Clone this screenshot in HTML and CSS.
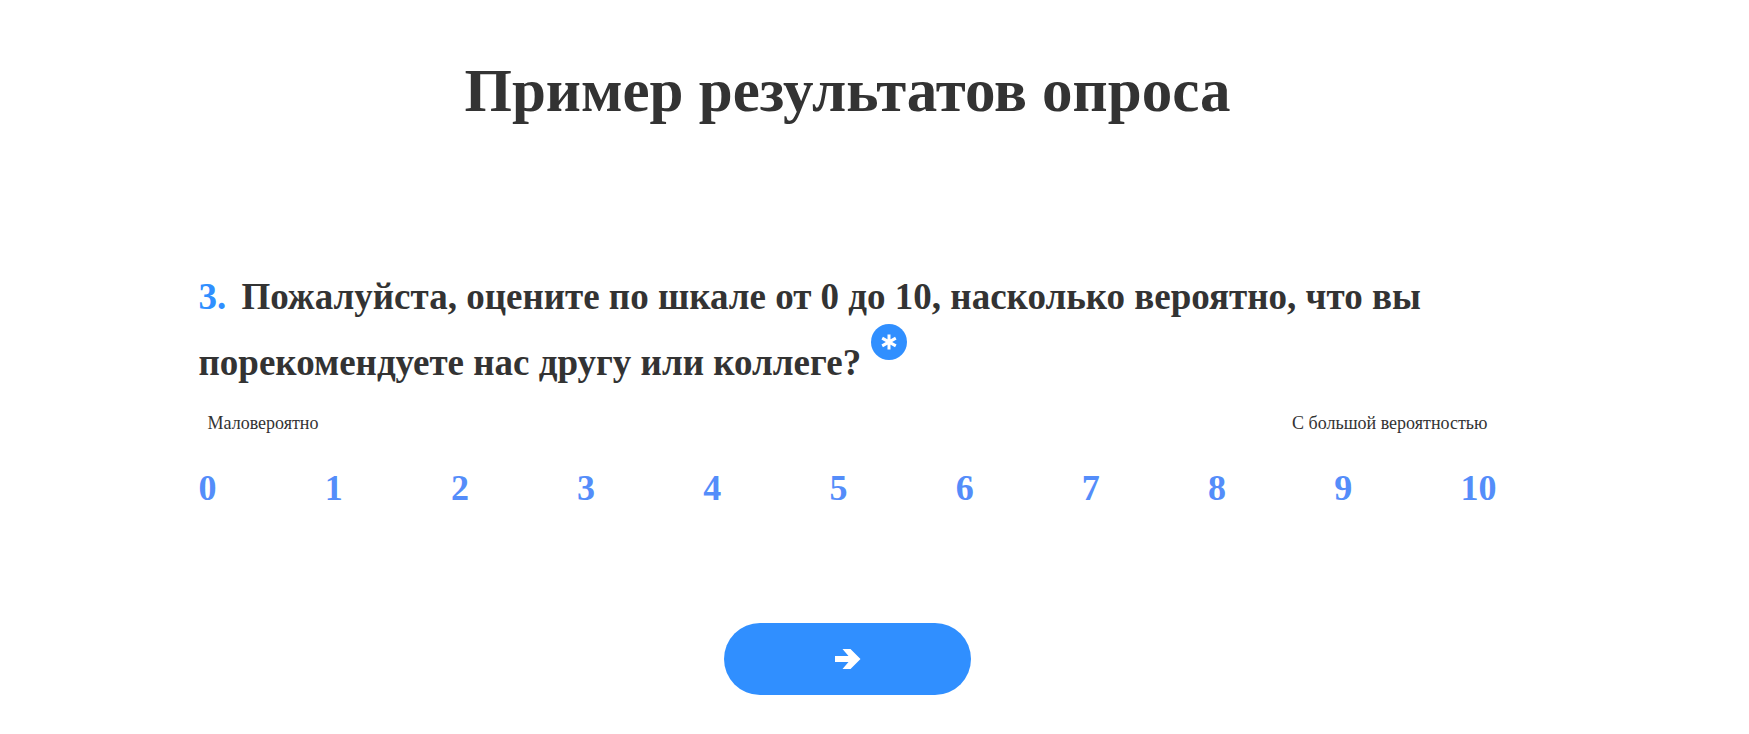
FILE: index.html
```html
<!DOCTYPE html>
<html lang="ru">
<head>
    <meta charset="UTF-8">
    <meta name="viewport" content="width=device-width, initial-scale=1.0">
    <title>Пример результатов опроса</title>
    <link rel="stylesheet" href="styles.css">
</head>
<body>
    <form class="survey">
        <h1 class="survey-title">Пример результатов опроса</h1>

        <section class="question">
            <h2 class="question-title" id="question-3">
                <span class="question-number">3.</span>
                Пожалуйста, оцените по шкале от 0 до 10, насколько вероятно, что вы порекомендуете нас другу или коллеге?
                <span class="required">
                    <svg viewBox="0 0 36 36" aria-hidden="true">
                        <path d="M18 10.500V25.500M11.200 14.100L24.800 21.900M24.800 14.100L11.200 21.900"/>
                    </svg>
                </span>
            </h2>

            <div class="scale-labels">
                <span>Маловероятно</span>
                <span>С большой вероятностью</span>
            </div>

            <div class="scale" role="group" aria-labelledby="question-3">
                <button type="button">0</button>
                <button type="button">1</button>
                <button type="button">2</button>
                <button type="button">3</button>
                <button type="button">4</button>
                <button type="button">5</button>
                <button type="button">6</button>
                <button type="button">7</button>
                <button type="button">8</button>
                <button type="button">9</button>
                <button type="button">10</button>
            </div>
        </section>

        <button class="next" type="submit" aria-label="Далее">
            <svg viewBox="0 0 26 20" aria-hidden="true">
                <path d="M0 7H13.500L7.500 0H15.500L25.500 10L15.500 20H7.500L13.500 13H0Z"/>
            </svg>
        </button>
    </form>
</body>
</html>
```
FILE: styles.css
```css
* {
    margin: 0;
    padding: 0;
    box-sizing: border-box;
}

body {
    background: #fff;
    color: #333;
    font-family: 'Liberation Serif', 'Times New Roman', serif;
    padding: 55px 54px 38px 0;
}

button {
    border: none;
    background: none;
    font-family: inherit;
    cursor: pointer;
}

.survey {
    max-width: 1298px;
    margin: 0 auto;
    display: flex;
    flex-direction: column;
    align-items: center;
}

.survey-title {
    font-size: 61px;
    line-height: 72px;
    text-align: center;
}

.question {
    width: 100%;
    margin-top: 137px;
}

.question-title {
    font-size: 37px;
    line-height: 66px;
}

.question-number {
    margin-right: 6px;
    color: #308fff;
}

.required {
    display: inline-block;
    width: 36px;
    height: 36px;
    margin-top: -16px;
    border-radius: 50%;
    background: #308fff;
    line-height: 0;
    vertical-align: 15px;
}

.required svg {
    width: 36px;
    height: 36px;
    fill: none;
    stroke: #fff;
    stroke-width: 3;
}

.scale-labels {
    display: flex;
    justify-content: space-between;
    margin-top: 16px;
    padding: 0 9px;
    font-size: 18px;
    line-height: 22px;
}

.scale {
    display: flex;
    justify-content: space-between;
    margin-top: 32px;
}

.scale button {
    color: #548dfa;
    font-size: 36px;
    font-weight: bold;
    line-height: 44px;
}

.next {
    display: flex;
    align-items: center;
    justify-content: center;
    width: 247px;
    height: 72px;
    margin-top: 113px;
    border-radius: 36px;
    background: #308fff;
}

.next svg {
    width: 26px;
    height: 20px;
    fill: #fff;
}
```
